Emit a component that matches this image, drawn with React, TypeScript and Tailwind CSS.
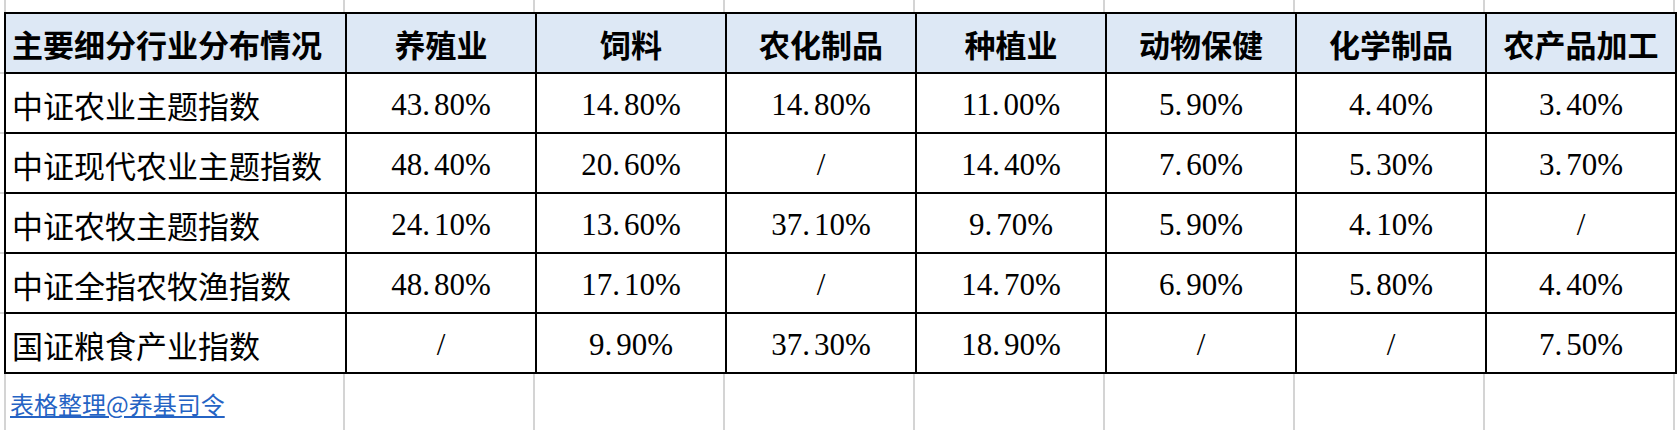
import React from "react";

const headers = ["养殖业", "饲料", "农化制品", "种植业", "动物保健", "化学制品", "农产品加工"];

const rows: [string, string[]][] = [
  ["中证农业主题指数", ["43.80%", "14.80%", "14.80%", "11.00%", "5.90%", "4.40%", "3.40%"]],
  ["中证现代农业主题指数", ["48.40%", "20.60%", "/", "14.40%", "7.60%", "5.30%", "3.70%"]],
  ["中证农牧主题指数", ["24.10%", "13.60%", "37.10%", "9.70%", "5.90%", "4.10%", "/"]],
  ["中证全指农牧渔指数", ["48.80%", "17.10%", "/", "14.70%", "6.90%", "5.80%", "4.40%"]],
  ["国证粮食产业指数", ["/", "9.90%", "37.30%", "18.90%", "/", "/", "7.50%"]],
];

// spreadsheet gridline strip (above / below the bordered table)
function GridStrip({ height, children }: { height: string; children?: React.ReactNode }) {
  return (
    <div className={`flex ${height}`}>
      <div className="w-[4px] shrink-0" />
      <div className="w-[341px] shrink-0 border-x-2 border-[#d4d4d4]">{children}</div>
      {headers.map((h) => (
        <div key={h} className="w-[190px] shrink-0 border-r-2 border-[#d4d4d4]" />
      ))}
    </div>
  );
}

// SimSun-like percentage: a roomy decimal point
function Value({ v }: { v: string }) {
  const [whole, frac] = v.split(".");
  if (frac === undefined) return <>{v}</>;
  return (
    <>
      {whole}
      <span className="pr-[4px]">.</span>
      {frac}
    </>
  );
}

export default function App() {
  return (
    <main className="h-[430px] w-[1680px] overflow-hidden bg-white text-black font-['Noto_Sans_CJK_SC','Noto_Sans',sans-serif]">
      <GridStrip height="h-[12px]" />

      <div className="flex">
        {/* row ticks left of the table */}
        <div className="w-[4px] shrink-0 pt-[60px]">
          {rows.map(([name]) => (
            <div key={name} className="h-[60px] border-t-2 border-[#d4d4d4]" />
          ))}
        </div>

        <table className="table-fixed border-collapse">
          <colgroup>
            <col className="w-[341px]" />
            {headers.map((h) => (
              <col key={h} className="w-[190px]" />
            ))}
          </colgroup>
          <thead>
            <tr className="h-[60px] bg-[#dde8f5]">
              <th className="border-2 border-black px-[6px] text-left text-[31px] font-bold leading-none">
                主要细分行业分布情况
              </th>
              {headers.map((h) => (
                <th key={h} className="border-2 border-black text-center text-[31px] font-bold leading-none">
                  {h}
                </th>
              ))}
            </tr>
          </thead>
          <tbody>
            {rows.map(([name, vals]) => (
              <tr key={name} className="h-[60px]">
                <td className="border-2 border-black px-[6px] pt-[3px] text-left text-[31px] leading-none">{name}</td>
                {vals.map((v, i) => (
                  <td
                    key={i}
                    className="border-2 border-black pt-[3px] text-center font-['Liberation_Serif'] text-[31px] leading-none"
                  >
                    <Value v={v} />
                  </td>
                ))}
              </tr>
            ))}
          </tbody>
        </table>
      </div>

      <GridStrip height="h-[60px]">
        <div className="pl-[4px] pt-[14px]">
          <a href="#" className="text-[24px] leading-[32px] text-[#2563c4] underline underline-offset-2">
            表格整理@养基司令
          </a>
        </div>
      </GridStrip>
    </main>
  );
}
